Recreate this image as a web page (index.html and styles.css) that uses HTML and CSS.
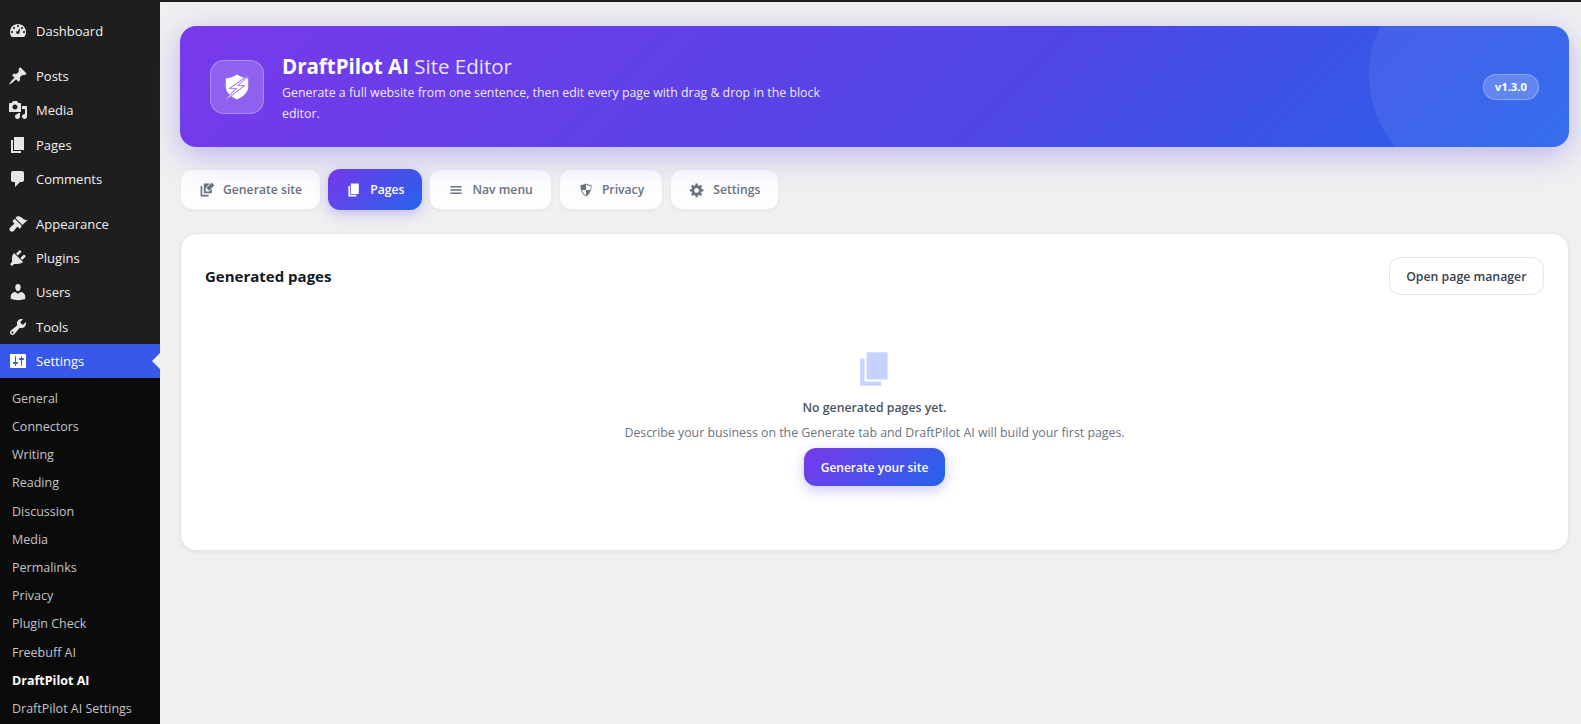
FILE: index.html
```html
<!DOCTYPE html>
<html lang="en">
<head>
  <meta charset="UTF-8" />
  <title>DraftPilot AI Site Editor</title>
  <link rel="stylesheet" href="styles.css">
</head>
<body>
  <!-- admin sidebar -->
  <nav class="sidebar">
    <ul class="menu">
      <li class="item"><svg class="icon" viewBox="0 0 20 20"><path d="M3.76 16h12.48c1.1-1.37 1.76-3.11 1.76-5 0-4.42-3.58-8-8-8s-8 3.58-8 8c0 1.89.66 3.63 1.76 5zM10 4c.55 0 1 .45 1 1s-.45 1-1 1-1-.45-1-1 .45-1 1-1zM6 6c.55 0 1 .45 1 1s-.45 1-1 1-1-.45-1-1 .45-1 1-1zm8 0c.55 0 1 .45 1 1s-.45 1-1 1-1-.45-1-1 .45-1 1-1zm-5.37 5.55L12 7l-.63 5.55c-.37.28-.84.45-1.37.45-1.1 0-2-.9-2-2 0-.57.24-1.08.63-1.45zM4 10c.55 0 1 .45 1 1s-.45 1-1 1-1-.45-1-1 .45-1 1-1zm12 0c.55 0 1 .45 1 1s-.45 1-1 1-1-.45-1-1 .45-1 1-1z"/></svg>Dashboard</li>
    </ul>
    <ul class="menu">
      <li class="item"><svg class="icon" viewBox="0 0 20 20"><path d="M10.44 3.02l1.82-1.82 6.36 6.35-1.83 1.82c-1.05-.68-2.48-.57-3.41.36l-.75.75c-.92.93-1.04 2.35-.35 3.41l-1.83 1.82-2.41-2.41-2.8 2.79c-.42.42-3.38 2.71-3.8 2.29s1.86-3.39 2.28-3.81l2.79-2.79L4.1 9.36l1.83-1.82c1.05.69 2.48.57 3.4-.36l.75-.75c.93-.92 1.05-2.35.36-3.41z"/></svg>Posts</li>
      <li class="item"><svg class="icon" viewBox="0 0 20 20"><path d="M13 11V4c0-.55-.45-1-1-1h-1.67L9 1H5L3.67 3H2c-.55 0-1 .45-1 1v7c0 .55.45 1 1 1h10c.55 0 1-.45 1-1zM7 4.5c1.38 0 2.5 1.12 2.5 2.5S8.38 9.5 7 9.5 4.5 8.38 4.5 7 5.62 4.5 7 4.5zM14 6h5v10.5c0 1.38-1.12 2.5-2.5 2.5S14 17.88 14 16.5s1.12-2.5 2.5-2.5c.17 0 .34.02.5.05V9h-3V6zm-4 8.05V13h2v3.5c0 1.38-1.12 2.5-2.5 2.5S7 17.88 7 16.5 8.12 14 9.5 14c.17 0 .34.02.5.05z"/></svg>Media</li>
      <li class="item"><svg class="icon" viewBox="0 0 20 20"><path d="M6 15V2h10v13H6zm-1 1h8v2H3V5h2v11z"/></svg>Pages</li>
      <li class="item"><svg class="icon" viewBox="0 0 20 20"><path d="M5 2h9c1.1 0 2 .9 2 2v7c0 1.1-.9 2-2 2h-2l-5 5v-5H5c-1.1 0-2-.9-2-2V4c0-1.1.9-2 2-2z"/></svg>Comments</li>
    </ul>
    <ul class="menu">
      <li class="item"><svg class="icon" viewBox="0 0 20 20"><path d="M14.48 11.06L7.41 3.99l1.5-1.5c.5-.56 2.3-.47 3.51.32 1.21.8 1.43 1.28 2.91 2.1 1.18.64 2.45 1.26 4.45.85zm-.71.71L6.7 4.7 4.93 6.47c-.39.39-.39 1.02 0 1.41l1.06 1.06c.39.39.39 1.03 0 1.42-.6.6-1.43 1.11-2.21 1.69-.35.26-.7.53-1.01.84C1.43 13.71.96 15.65 2.2 16.9c1.25 1.25 3.19.78 4.01-.39.3-.4.57-.75.82-1.09.58-.78 1.1-1.6 1.7-2.21.39-.39 1.02-.39 1.41 0l1.06 1.06c.39.39 1.02.39 1.41 0z"/></svg>Appearance</li>
      <li class="item"><svg class="icon" viewBox="0 0 20 20"><path d="M13.11 4.36L9.87 7.6 8 5.73l3.24-3.24c.35-.34 1.05-.2 1.56.32.52.51.66 1.21.31 1.55zm-8 1.77l.91-1.12 9.01 9.01-1.19.84c-.71.71-2.63 1.16-3.82 1.16H6.14L4.9 17.26c-.59.59-1.54.59-2.12 0-.59-.58-.59-1.53 0-2.12l1.24-1.24v-3.88c0-1.13.4-3.19 1.09-3.89zm7.26 3.97l3.24-3.24c.34-.35 1.04-.21 1.55.31.52.51.66 1.21.31 1.55l-3.24 3.25z"/></svg>Plugins</li>
      <li class="item"><svg class="icon" viewBox="0 0 20 20"><path d="M10 9.25c-2.27 0-2.73-3.44-2.73-3.44C7 4.02 7.82 2 9.97 2c2.16 0 2.98 2.02 2.71 3.81 0 0-.41 3.44-2.68 3.44zm0 2.57L12.72 10c2.39 0 4.52 2.33 4.52 4.53v2.49s-3.65 1.13-7.24 1.13c-3.65 0-7.24-1.13-7.24-1.13v-2.49c0-2.25 1.94-4.48 4.47-4.48z"/></svg>Users</li>
      <li class="item"><svg class="icon" viewBox="0 0 20 20"><path d="M16.68 9.77c-1.34 1.34-3.3 1.67-4.95.99l-5.41 6.52c-.99.99-2.59.99-3.58 0s-.99-2.59 0-3.57l6.52-5.42c-.68-1.65-.35-3.61.99-4.95 1.28-1.28 3.12-1.62 4.72-1.06l-2.89 2.89 2.82 2.82 2.86-2.87c.53 1.58.18 3.39-1.08 4.65zM3.81 16.21c.4.39 1.04.39 1.43 0 .4-.4.4-1.04 0-1.43-.39-.4-1.03-.4-1.43 0-.39.39-.39 1.03 0 1.43z"/></svg>Tools</li>
      <li class="item current"><svg class="icon" viewBox="0 0 20 20"><path d="M18 16V4c0-.55-.45-1-1-1H3c-.55 0-1 .45-1 1v12c0 .55.45 1 1 1h14c.55 0 1-.45 1-1zM8 11h1c.55 0 1 .45 1 1s-.45 1-1 1H8v1.5c0 .28-.22.5-.5.5s-.5-.22-.5-.5V13H6c-.55 0-1-.45-1-1s.45-1 1-1h1V5.5c0-.28.22-.5.5-.5s.5.22.5.5V11zm5-2h-1c-.55 0-1-.45-1-1s.45-1 1-1h1V5.5c0-.28.22-.5.5-.5s.5.22.5.5V7h1c.55 0 1 .45 1 1s-.45 1-1 1h-1v5.5c0 .28-.22.5-.5.5s-.5-.22-.5-.5V9z"/></svg>Settings</li>
    </ul>
    <ul class="submenu">
      <li>General</li>
      <li>Connectors</li>
      <li>Writing</li>
      <li>Reading</li>
      <li>Discussion</li>
      <li>Media</li>
      <li>Permalinks</li>
      <li>Privacy</li>
      <li>Plugin Check</li>
      <li>Freebuff AI</li>
      <li class="on">DraftPilot AI</li>
      <li>DraftPilot AI Settings</li>
    </ul>
  </nav>

  <main class="content">
    <header class="banner">
      <div class="logo">
        <svg viewBox="0 0 24 24"><path class="shield" d="M12 2c2.9 1.8 5.9 2.8 9 3.1v6.3c0 4.8-3.7 8.300-9 10.600-5.300-2.300-9-5.800-9-10.600V5.100C6.100 4.800 9.100 3.800 12 2z"/><path class="bolt" d="M21.5 2.5 7 12.8h5.200L2.500 22.500 17 11.200h-5.200z"/></svg>
      </div>
      <div class="banner-text">
        <h1 class="title"><b>DraftPilot AI</b> Site Editor</h1>
        <p class="lead">Generate a full website from one sentence, then edit every page with drag &amp; drop in the block editor.</p>
      </div>
      <span class="version">v1.3.0</span>
    </header>

    <div class="tabs">
      <button class="tab"><svg viewBox="0 0 20 20"><path d="M4 5H2v13h10v-2H4V5zm2-3v12h10V8.5l-3.3 3.3H8.3V7.400L13.700 2H6zm9.300-.5-6 6 3.300 3.300 6-6c.4-.4.4-1 0-1.400l-1.900-1.900c-.4-.4-1-.4-1.400 0z"/></svg>Generate site</button>
      <button class="tab active"><svg viewBox="0 0 20 20"><path d="M6 15V2h10v13H6zm-1 1h8v2H3V5h2v11z"/></svg>Pages</button>
      <button class="tab"><svg viewBox="0 0 20 20"><path d="M17 7V5H3v2h14zm0 4V9H3v2h14zm0 4v-2H3v2h14z"/></svg>Nav menu</button>
      <button class="tab"><svg viewBox="0 0 20 20"><path d="M10 2s3 2 7 2c0 11-7 14-7 14S3 15 3 4c4 0 7-2 7-2zm0 8h5s1-1 1-5c0 0-5-1-6-2v7H5c1 4 5 7 5 7v-7z"/></svg>Privacy</button>
      <button class="tab"><svg viewBox="0 0 20 20"><path d="M18 12h-2.18c-.17.7-.44 1.35-.81 1.93l1.54 1.54-2.1 2.1-1.54-1.54c-.58.36-1.23.63-1.91.79V19H8v-2.18c-.68-.16-1.33-.43-1.91-.79l-1.54 1.54-2.12-2.12 1.54-1.54c-.36-.58-.63-1.23-.79-1.91H1V9.03h2.17c.16-.7.44-1.35.8-1.94L2.43 5.55l2.1-2.1 1.54 1.54c.58-.37 1.24-.64 1.93-.81V2h3v2.18c.68.16 1.33.43 1.91.79l1.54-1.54 2.12 2.12-1.54 1.54c.36.59.64 1.24.8 1.94H18V12zm-8.5 1.5c1.66 0 3-1.34 3-3s-1.34-3-3-3-3 1.34-3 3 1.34 3 3 3z"/></svg>Settings</button>
    </div>

    <section class="card">
      <div class="card-head">
        <h2 class="card-title">Generated pages</h2>
        <button class="btn-outline">Open page manager</button>
      </div>
      <div class="empty">
        <svg class="empty-icon" viewBox="0 0 20 20"><path d="M6 15V2h10v13H6zm-1 1h8v2H3V5h2v11z"/></svg>
        <p class="empty-title">No generated pages yet.</p>
        <p class="empty-text">Describe your business on the Generate tab and DraftPilot AI will build your first pages.</p>
        <button class="btn-primary">Generate your site</button>
      </div>
    </section>
  </main>
</body>
</html>
```

FILE: styles.css
```css
* { box-sizing: border-box; }
html, body { height: 100%; margin: 0; }
body {
  display: flex;
  overflow: hidden;
  background: #f0f0f1;
  font-family: "Open Sans", sans-serif;
  font-size: 13px;
}
ul { list-style: none; margin: 0; padding: 0; }
p, h1, h2 { margin: 0; }
button { font-family: inherit; cursor: pointer; }

/* sidebar */
.sidebar {
  width: 160px;
  flex: none;
  padding-top: 14px;
  background: #1e1e1e;
  overflow: hidden;
}
.menu { margin-bottom: 11px; }
.menu:nth-child(3) { margin-bottom: 0; }
.item {
  position: relative;
  display: flex;
  align-items: center;
  height: 34.2px;
  padding-left: 8px;
  color: #f0f0f1;
}
.icon { width: 20px; height: 20px; margin-right: 8px; fill: #e6e6e6; flex: none; }
.item.current { background: #3858e9; color: #fff; }
.item.current .icon { fill: #fff; }
.item.current::after {
  content: "";
  position: absolute;
  right: 0;
  top: 9px;
  border: 8px solid transparent;
  border-left: 0;
  border-right-color: #f0f0f1;
}
.submenu {
  height: 346px;
  padding: 7px 0 0 12px;
  background: #0b0b0b;
  color: #c3c4c7;
  font-size: 12.5px;
}
.submenu li { height: 28.2px; line-height: 28px; white-space: nowrap; }
.submenu .on { color: #fff; font-weight: 700; }

/* main column */
.content {
  flex: 1;
  min-width: 0;
  padding: 24px 12px 0 20px;
  border-top: 2px solid #1e1e1e;
}

.banner {
  position: relative;
  display: flex;
  align-items: center;
  height: 121px;
  padding: 0 30px;
  border-radius: 16px;
  background: linear-gradient(135deg, #7839ec 0%, #4f46e5 60%, #2563eb 100%);
  box-shadow: 0 8px 32px rgba(79,70,229,0.35);
  color: #fff;
  overflow: hidden;
}
.banner::before {
  content: "";
  position: absolute;
  top: -61px;
  right: -20px;
  width: 220px;
  height: 220px;
  border-radius: 50%;
  background: rgba(255,255,255,0.07);
}
.logo {
  display: flex;
  align-items: center;
  justify-content: center;
  width: 54px;
  height: 54px;
  margin-right: 18px;
  flex: none;
  border-radius: 14px;
  background: rgba(255,255,255,0.2);
  border: 1px solid rgba(255,255,255,0.28);
}
.logo svg { width: 30px; height: 30px; }
.shield { fill: #fff; }
.bolt { fill: #fff; stroke: #9264f0; stroke-width: 1.3; paint-order: stroke; }
.banner-text { max-width: 560px; margin-top: 2px; }
.title { margin-bottom: 2px; font-size: 20.5px; line-height: 28px; font-weight: 400; color: rgba(255,255,255,0.88); }
.title b { font-weight: 700; color: #fff; }
.lead { font-size: 12.35px; line-height: 21px; color: rgba(255,255,255,0.92); }
.version {
  position: relative;
  margin-left: auto;
  padding: 0 11px;
  height: 26px;
  line-height: 24px;
  border-radius: 13px;
  font-size: 11.3px;
  font-weight: 700;
  background: rgba(255,255,255,0.2);
  border: 1px solid rgba(255,255,255,0.28);
}

/* tabs */
.tabs { display: flex; gap: 7px; margin-top: 22px; }
.tab {
  display: flex;
  align-items: center;
  gap: 8px;
  height: 41px;
  padding: 0 18px;
  border: 1px solid #ececf1;
  border-radius: 12px;
  background: rgba(255,255,255,0.85);
  color: #6b7280;
  font-size: 12.2px;
  font-weight: 600;
  box-shadow: 0 1px 3px rgba(0,0,0,0.05);
}
.tab svg { width: 16px; height: 16px; fill: currentColor; flex: none; }
.tab.active {
  border: 0;
  color: #fff;
  background: linear-gradient(135deg, #7839ec, #2563eb);
  box-shadow: 0 4px 14px rgba(79,70,229,0.3);
}

/* card */
.card {
  height: 318px;
  margin-top: 23px;
  padding: 23px 24px;
  background: #fff;
  border: 1px solid #e6e6e8;
  border-radius: 16px;
  box-shadow: 0 1px 4px rgba(0,0,0,0.06);
}
.card-head { display: flex; align-items: center; justify-content: space-between; }
.card-title { font-size: 15px; font-weight: 700; color: #111827; }
.btn-outline {
  height: 38px;
  padding: 0 16.5px;
  background: #fff;
  border: 1.5px solid #e5e7eb;
  border-radius: 12px;
  color: #374151;
  font-size: 12.3px;
  font-weight: 600;
}
.empty { display: flex; flex-direction: column; align-items: center; margin-top: 53px; }
.empty-icon { width: 42px; height: 42px; fill: #c7d2fe; }
.empty-title { margin-top: 8px; font-size: 12.3px; line-height: 20px; font-weight: 600; color: #4b5563; }
.empty-text { margin-top: 5px; font-size: 12.35px; line-height: 20px; color: #6b7280; }
.btn-primary {
  height: 38px;
  margin-top: 5px;
  padding: 0 17px;
  border: 0;
  border-radius: 12px;
  color: #fff;
  font-size: 12px;
  font-weight: 600;
  background: linear-gradient(135deg, #7839ec, #2563eb);
  box-shadow: 0 4px 14px rgba(79,70,229,0.3);
}
```
